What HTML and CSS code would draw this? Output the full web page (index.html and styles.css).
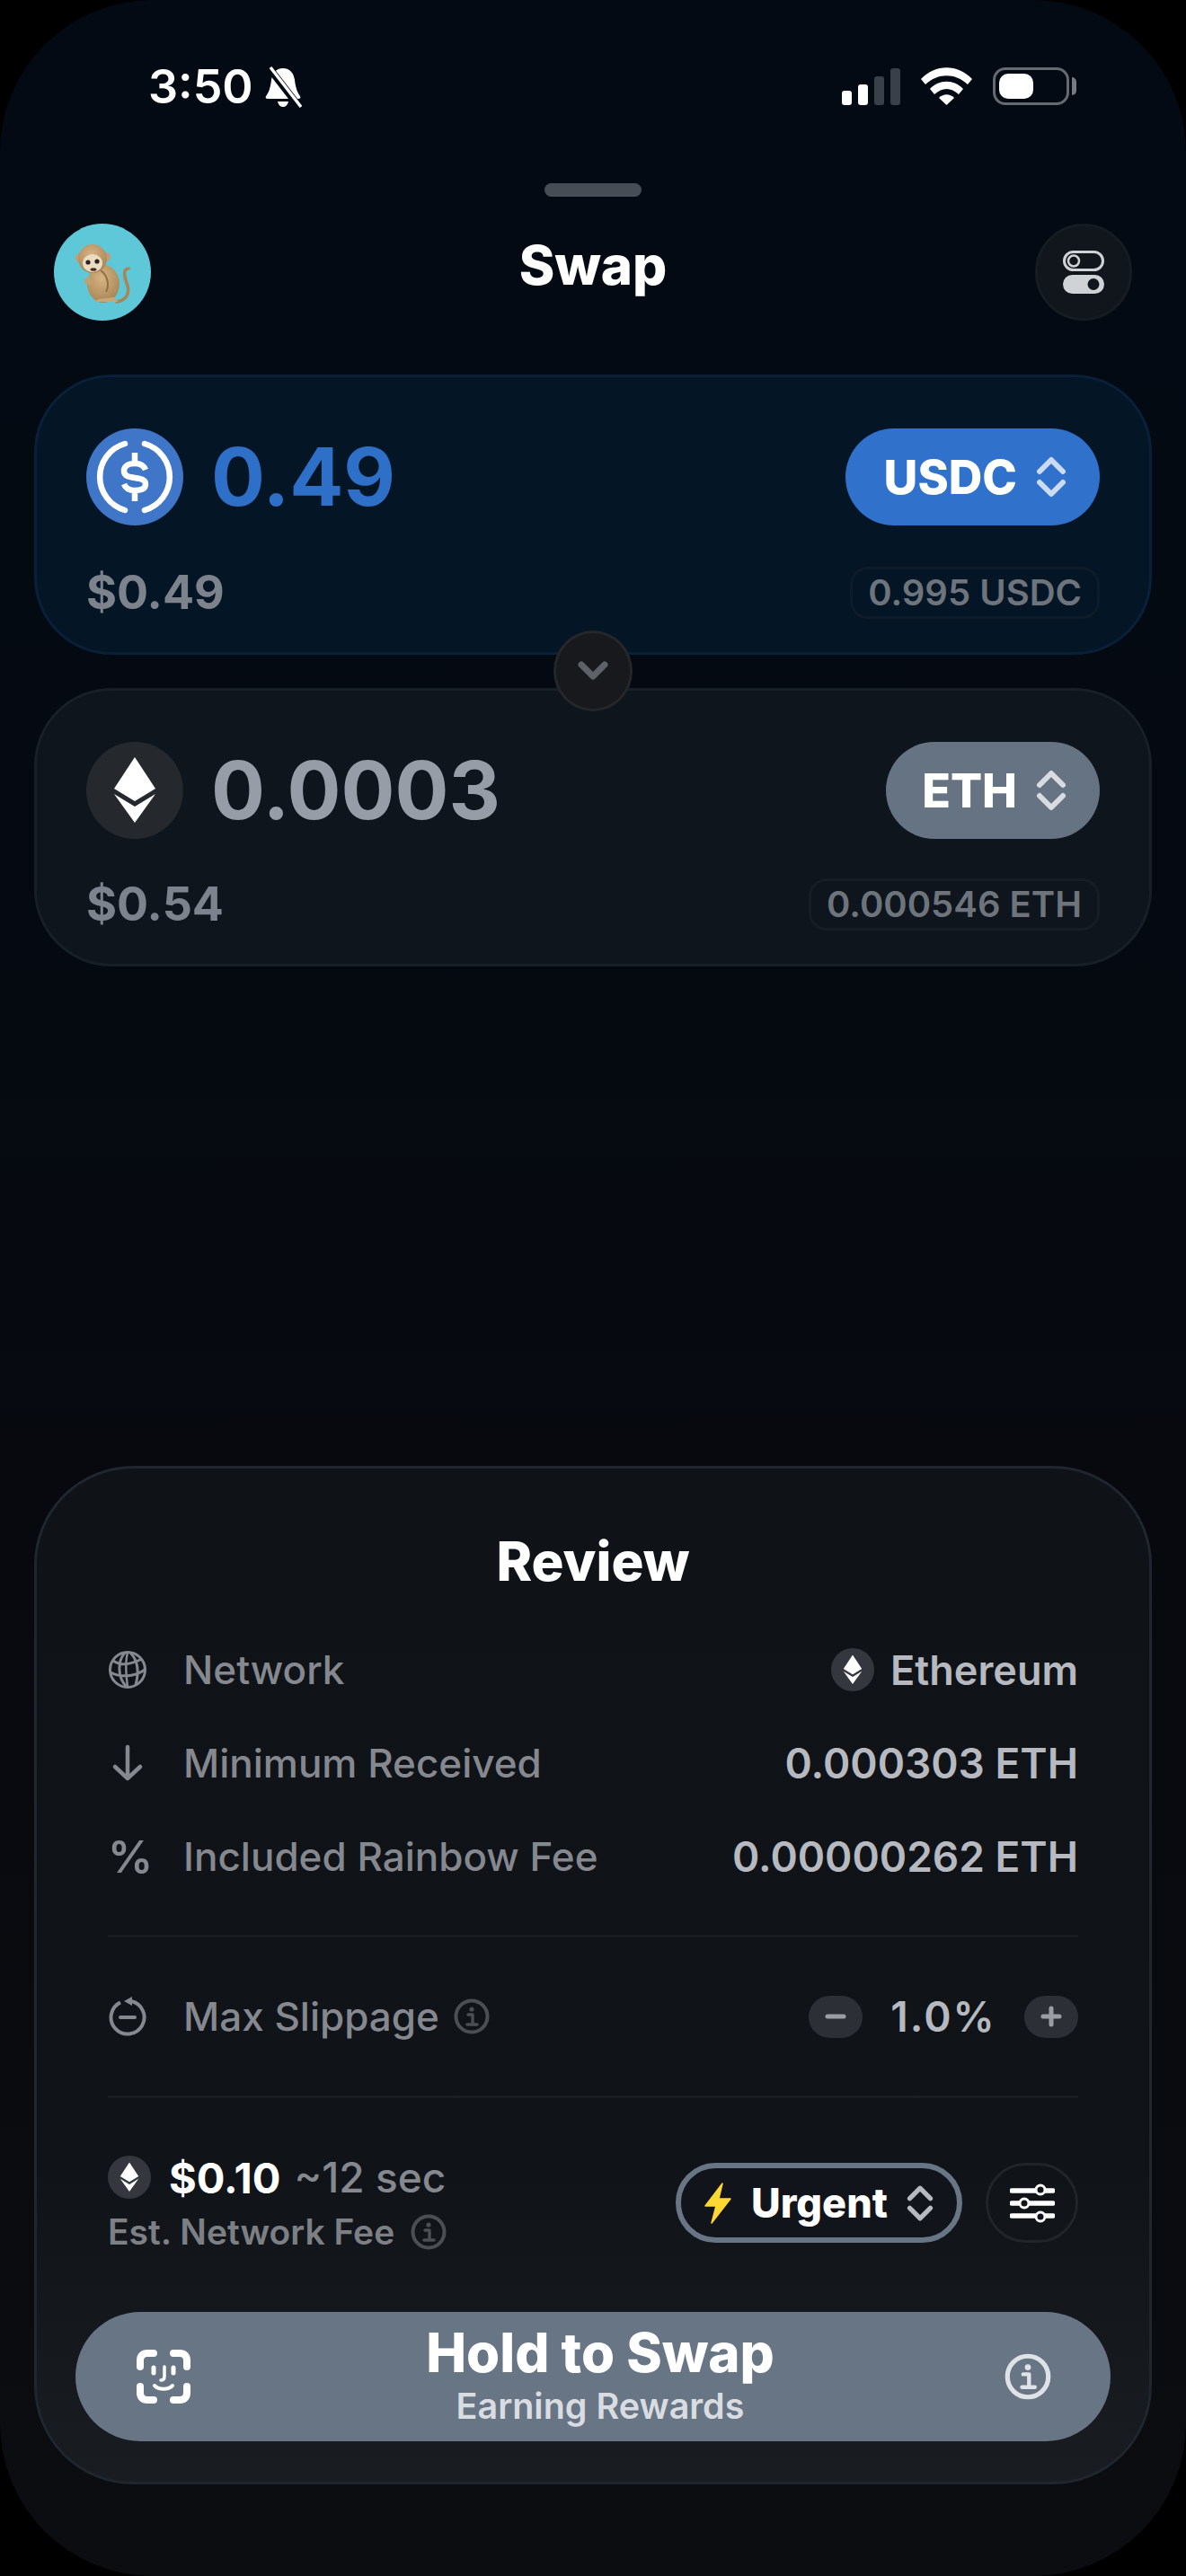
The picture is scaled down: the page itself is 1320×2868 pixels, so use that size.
FILE: index.html
```html
<!DOCTYPE html>
<html lang="en">
<head>
    <meta charset="UTF-8">
    <title>Swap</title>
    <link rel="stylesheet" href="styles.css">
</head>
<body>
    <svg class="defs" width="0" height="0">
        <symbol id="eth" viewBox="0 0 108 108">
            <polygon points="54,17 77,52 54,66 31,52" fill="#fff"/>
            <polygon points="31,58 54,72 77,58 54,90" fill="#fff"/>
        </symbol>
        <symbol id="updown" viewBox="0 0 34 46">
            <path d="M4 17 L17 4 L30 17 M4 29 L17 42 L30 29" fill="none" stroke="currentColor" stroke-width="6" stroke-linecap="round" stroke-linejoin="round"/>
        </symbol>
        <symbol id="info" viewBox="0 0 40 40">
            <circle cx="20" cy="20" r="17.5" fill="none" stroke="currentColor" stroke-width="4"/>
            <circle cx="20" cy="12" r="2.6" fill="currentColor"/>
            <path d="M16 18 H21 V28 M15 29 H26" fill="none" stroke="currentColor" stroke-width="3.4" stroke-linecap="round" stroke-linejoin="round"/>
        </symbol>
    </svg>

    <div class="screen">
        <div class="status">
            <div class="status-left">
                <span class="time">3:50</span>
                <svg class="bell" viewBox="0 0 42 46">
                    <path d="M21 2 C13 2 9 8 8 15 C7 24 5 29 2 33 C1 35 2 36 4 36 H38 C40 36 41 35 40 33 C37 29 35 24 34 15 C33 8 29 2 21 2 Z" fill="#fff"/>
                    <path d="M15 39 H27 C26 43 24 45 21 45 C18 45 16 43 15 39 Z" fill="#fff"/>
                    <path d="M5 1 L39 45" stroke="#030a13" stroke-width="8"/>
                    <path d="M7 1 L41 45" stroke="#fff" stroke-width="3.4"/>
                </svg>
            </div>
            <div class="status-right">
                <div class="signal">
                    <i class="bar bar1"></i>
                    <i class="bar bar2"></i>
                    <i class="bar bar3"></i>
                    <i class="bar bar4"></i>
                </div>
                <svg class="wifi" viewBox="0 0 57 42">
                    <path d="M0 13 C16 -4 41 -4 57 13 L52 19 C38 6 19 6 5 19 Z" fill="#fff"/>
                    <path d="M10 24 C20 13 37 13 47 24 L42 30 C33 22 24 22 15 30 Z" fill="#fff"/>
                    <path d="M20 34 C25 29 32 29 37 34 L28.500 42 Z" fill="#fff"/>
                </svg>
                <div class="battery"><div class="battery-level"></div></div>
                <div class="battery-nub"></div>
            </div>
        </div>

        <div class="handle"></div>

        <div class="header">
            <div class="avatar">
                <svg viewBox="0 0 108 108" width="108" height="108">
                    <defs>
                        <radialGradient id="fur" cx="45%" cy="35%" r="75%">
                            <stop offset="0" stop-color="#d6b483"/>
                            <stop offset="1" stop-color="#a27f50"/>
                        </radialGradient>
                    </defs>
                    <path d="M70 87 C82 85 85 76 81 66 C78 58 77 50 83 50" fill="none" stroke="#a88657" stroke-width="3.600" stroke-linecap="round"/>
                    <ellipse cx="55" cy="67" rx="18" ry="21" fill="url(#fur)"/>
                    <path d="M44 87 L72 87 L66 82 L50 84 Z" fill="#c9a678"/>
                    <path d="M52 52 C60 58 62 68 58 76" fill="none" stroke="#93703f" stroke-width="2"/>
                    <ellipse cx="39" cy="64" rx="5" ry="4" fill="#c4a070"/>
                    <circle cx="29" cy="38" r="5" fill="#c99a78"/>
                    <circle cx="58" cy="37" r="5" fill="#c99a78"/>
                    <ellipse cx="43" cy="39" rx="16" ry="16" fill="url(#fur)"/>
                    <ellipse cx="43" cy="44" rx="11" ry="10" fill="#eadcc0"/>
                    <circle cx="38" cy="43" r="2.600" fill="#2a2320"/>
                    <circle cx="48" cy="42" r="2.600" fill="#2a2320"/>
                    <ellipse cx="44" cy="51" rx="3.500" ry="1.800" fill="#4a2c22"/>
                </svg>
            </div>
            <h1 class="title">Swap</h1>
            <div class="round-btn">
                <svg viewBox="0 0 46 48" width="46" height="48">
                    <rect x="1.500" y="1.500" width="43" height="20" rx="10" fill="none" stroke="#d0d3d6" stroke-width="3"/>
                    <circle cx="12" cy="11.500" r="6" fill="none" stroke="#d0d3d6" stroke-width="2.500"/>
                    <rect x="0" y="27" width="46" height="21" rx="10.500" fill="#d0d3d6"/>
                    <circle cx="34" cy="37.500" r="6.500" fill="#10161c"/>
                </svg>
            </div>
        </div>

        <div class="swap-cards">
            <div class="token-card token-card-usdc">
                <div class="token-row">
                    <svg class="token-icon" viewBox="0 0 108 108">
                        <circle cx="54" cy="54" r="54" fill="#3f76c8"/>
                        <path d="M43 17 A38.500 38.500 0 0 0 43 91 M65 17 A38.500 38.500 0 0 1 65 91" fill="none" stroke="#fff" stroke-width="6.500" stroke-linecap="round"/>
                        <path d="M66 46 C64 41 60 39 54 39 C47 39 42 42 42 47 C42 53 47 54 54 55 C61 56 66 57 66 62 C66 67 61 69 54 69 C48 69 44 67 42 62 M54 27 V39 M54 69 V81" fill="none" stroke="#fff" stroke-width="6.500"/>
                    </svg>
                    <span class="amount amount-usdc">0.49</span>
                    <div class="token-pill pill-usdc">
                        <span>USDC</span>
                        <svg class="updown"><use href="#updown"/></svg>
                    </div>
                </div>
                <div class="value-row">
                    <span class="fiat">$0.49</span>
                    <span class="balance">0.995 USDC</span>
                </div>
            </div>

            <div class="flip-btn">
                <svg viewBox="0 0 36 24" width="36" height="24">
                    <path d="M5 5 L18 18 L31 5" fill="none" stroke="#5e6268" stroke-width="7" stroke-linecap="round" stroke-linejoin="round"/>
                </svg>
            </div>

            <div class="token-card token-card-eth">
                <div class="token-row">
                    <div class="eth-circle eth-large"><svg><use href="#eth"/></svg></div>
                    <span class="amount amount-eth">0.0003</span>
                    <div class="token-pill pill-eth">
                        <span>ETH</span>
                        <svg class="updown"><use href="#updown"/></svg>
                    </div>
                </div>
                <div class="value-row">
                    <span class="fiat">$0.54</span>
                    <span class="balance">0.000546 ETH</span>
                </div>
            </div>
        </div>

        <div class="review">
            <h2 class="review-title">Review</h2>
            <div class="review-body">
                <div class="row">
                    <div class="row-label">
                        <svg class="row-icon" viewBox="0 0 44 44" fill="none" stroke="#85898f" stroke-width="3">
                            <circle cx="22" cy="22" r="19.500"/>
                            <path d="M19 3 C11 12 10 30 21 41 M25 3 C33 11 35 24 31 39 M6 12 C16 19 30 14 38 10 M3 25 C14 31 30 30 41 22"/>
                            <path d="M22 3 C19 14 20 26 22 41" stroke-width="2.500"/>
                        </svg>
                        <span>Network</span>
                    </div>
                    <div class="row-value row-value-network">
                        <div class="eth-circle eth-small"><svg><use href="#eth"/></svg></div>
                        <span>Ethereum</span>
                    </div>
                </div>
                <div class="row">
                    <div class="row-label">
                        <svg class="row-icon" viewBox="0 0 44 44" fill="none" stroke="#85898f" stroke-width="4.500" stroke-linecap="round" stroke-linejoin="round">
                            <path d="M22 4 V39 M8 26 L22 39 L36 26"/>
                        </svg>
                        <span>Minimum Received</span>
                    </div>
                    <div class="row-value"><span>0.000303 ETH</span></div>
                </div>
                <div class="row">
                    <div class="row-label">
                        <span class="row-icon percent">%</span>
                        <span>Included Rainbow Fee</span>
                    </div>
                    <div class="row-value"><span>0.00000262 ETH</span></div>
                </div>

                <div class="divider divider-first"></div>

                <div class="row row-slippage">
                    <div class="row-label">
                        <svg class="row-icon" viewBox="0 0 44 44" fill="none" stroke="#85898f" stroke-width="4">
                            <path d="M26 5 A18.500 18.500 0 1 1 14 6.400"/>
                            <path d="M27 0 L18 5 L27 10 Z" fill="#85898f" stroke="none"/>
                            <path d="M14 23 H30" stroke-linecap="round"/>
                        </svg>
                        <span>Max Slippage</span>
                        <svg class="info info-row"><use href="#info"/></svg>
                    </div>
                    <div class="row-value stepper">
                        <div class="step-btn">
                            <svg viewBox="0 0 24 24" width="24" height="24"><path d="M3 12 H21" stroke="#9a9da2" stroke-width="5" stroke-linecap="round"/></svg>
                        </div>
                        <span class="slippage">1.0%</span>
                        <div class="step-btn">
                            <svg viewBox="0 0 24 24" width="24" height="24"><path d="M3 12 H21 M12 3 V21" stroke="#9a9da2" stroke-width="5" stroke-linecap="round"/></svg>
                        </div>
                    </div>
                </div>

                <div class="divider"></div>

                <div class="fee-row">
                    <div class="fee-info">
                        <div class="fee-top">
                            <div class="eth-circle eth-fee"><svg><use href="#eth"/></svg></div>
                            <span class="fee-price">$0.10</span>
                            <span class="fee-time">~12 sec</span>
                        </div>
                        <div class="fee-bottom">
                            <span>Est. Network Fee</span>
                            <svg class="info info-fee"><use href="#info"/></svg>
                        </div>
                    </div>
                    <div class="fee-actions">
                        <div class="speed-pill">
                            <svg class="bolt" viewBox="0 0 30 46">
                                <path d="M20 1 L1 26 H13 L8 45 L29 18 H16 Z" fill="#fdd835" stroke="#fdd835" stroke-width="1.500" stroke-linejoin="round"/>
                            </svg>
                            <span>Urgent</span>
                            <svg class="updown updown-speed"><use href="#updown"/></svg>
                        </div>
                        <div class="sliders-btn">
                            <svg viewBox="0 0 50 44" width="50" height="44" fill="none" stroke="#fff">
                                <path d="M2 8 H48 M2 22 H48 M2 36 H48" stroke-width="5.500" stroke-linecap="round"/>
                                <circle cx="34" cy="7" r="5" fill="#11141a" stroke-width="3"/>
                                <circle cx="16" cy="22" r="5" fill="#11141a" stroke-width="3"/>
                                <circle cx="34" cy="37" r="5" fill="#11141a" stroke-width="3"/>
                            </svg>
                        </div>
                    </div>
                </div>
            </div>

            <div class="hold-btn">
                <svg class="face-id" viewBox="0 0 60 60" fill="none" stroke="#fff" stroke-linecap="round">
                    <path d="M4 19 V12 C4 7 7 4 12 4 H19 M41 4 H48 C53 4 56 7 56 12 V19 M4 41 V48 C4 53 7 56 12 56 H19 M41 56 H48 C53 56 56 53 56 48 V41" stroke-width="8"/>
                    <path d="M19 20 V26 M41 20 V26" stroke-width="5"/>
                    <path d="M31 19 V30 C31 33 29 34 27 34" stroke-width="3.500"/>
                    <path d="M20 40 C25 45 35 45 40 40" stroke-width="4"/>
                </svg>
                <div class="hold-text">
                    <span class="hold-title">Hold to Swap</span>
                    <span class="hold-sub">Earning Rewards</span>
                </div>
                <svg class="info info-hold"><use href="#info"/></svg>
            </div>
        </div>
    </div>
</body>
</html>
```

FILE: styles.css
```css
* { margin: 0; padding: 0; box-sizing: border-box; }
html, body { background: #000; }
body {
    width: 1320px;
    height: 2868px;
    overflow: hidden;
    font-family: Inter, "Liberation Sans", sans-serif;
    color: #fff;
}
.defs { position: absolute; }

.screen {
    width: 1320px;
    height: 2868px;
    border-radius: 170px;
    background: linear-gradient(180deg, #030a13 0%, #050a11 40%, #07090e 60%, #0b0d10 100%);
    display: flex;
    flex-direction: column;
}

/* status bar */
.status {
    height: 204px;
    padding: 74px 122px 0 165px;
    display: flex;
    justify-content: space-between;
    align-items: flex-start;
}
.status-left { display: flex; align-items: center; gap: 12px; height: 46px; }
.time { font-size: 52px; font-weight: 600; line-height: 46px; }
.bell { width: 42px; height: 46px; }
.status-right { display: flex; align-items: flex-end; height: 43px; }
.signal { display: flex; align-items: flex-end; gap: 7px; margin-right: 23px; }
.bar { display: block; width: 11px; border-radius: 3px; background: #fff; }
.bar1 { height: 16px; }
.bar2 { height: 23px; }
.bar3 { height: 32px; background: #3a4047; }
.bar4 { height: 41px; background: #3a4047; }
.wifi { width: 57px; height: 42px; margin-right: 23px; }
.battery {
    width: 85px;
    height: 42px;
    border: 3px solid #666a70;
    border-radius: 14px;
    padding: 4px;
}
.battery-level { width: 38px; height: 100%; background: #fff; border-radius: 10px; }
.battery-nub {
    width: 5px;
    height: 20px;
    margin: 0 0 11px 3px;
    background: #777b80;
    border-radius: 0 5px 5px 0;
}

.handle {
    width: 108px;
    height: 15px;
    margin: 0 auto;
    border-radius: 8px;
    background: #474d55;
}

/* header */
.header {
    height: 108px;
    margin-top: 30px;
    padding: 0 60px;
    display: flex;
    justify-content: space-between;
    align-items: center;
}
.avatar { width: 108px; height: 108px; border-radius: 50%; background: #5ec8d8; overflow: hidden; }
.title { font-size: 60px; font-weight: 800; line-height: 68px; margin-top: -16px; }
.round-btn {
    width: 108px;
    height: 108px;
    border-radius: 50%;
    background: #10161c;
    border: 3px solid #161c22;
    display: flex;
    justify-content: center;
    align-items: center;
}

/* token cards */
.swap-cards {
    position: relative;
    margin: 60px 38px 0;
    display: flex;
    flex-direction: column;
    gap: 37px;
}
.token-card {
    height: 312px;
    padding: 57px 55px 35px;
    border-radius: 86px;
    border: 3px solid;
    display: flex;
    flex-direction: column;
    justify-content: space-between;
}
.token-card-usdc { background: #041525; border-color: #08203a; }
.token-card-eth { height: 310px; background: #0e151d; border-color: #181f27; }
.token-row { display: flex; align-items: center; height: 108px; }
.token-icon { width: 108px; height: 108px; }
.eth-circle {
    border-radius: 50%;
    background: #25292e;
    flex-shrink: 0;
}
.eth-circle svg { display: block; width: 100%; height: 100%; }
.eth-large { width: 108px; height: 108px; }
.eth-small { width: 48px; height: 48px; background: #34383e; }
.eth-fee { width: 48px; height: 48px; background: #34383e; }
.amount { font-size: 89px; font-weight: 700; margin-left: 31px; line-height: 108px; }
.amount-usdc { color: #2e6fc8; }
.amount-eth { color: #979da6; }
.token-pill {
    margin-left: auto;
    height: 108px;
    border-radius: 54px;
    padding: 0 37px 0 43px;
    display: flex;
    align-items: center;
    gap: 21px;
    font-size: 52px;
    font-weight: 800;
}
.pill-usdc { background: #3071cc; }
.pill-eth { padding-left: 40px; background: #667382; }
.updown { width: 34px; height: 46px; color: rgba(255, 255, 255, 0.75); }
.value-row { display: flex; justify-content: space-between; align-items: center; }
.fiat { font-size: 52px; font-weight: 700; color: #7c838c; }
.balance {
    height: 58px;
    padding: 0 17px;
    border-radius: 20px;
    border: 3px solid #101b28;
    font-size: 40px;
    font-weight: 600;
    line-height: 52px;
    color: #6e747c;
}
.token-card-eth .balance { border-color: #171d24; }
.flip-btn {
    position: absolute;
    top: 285px;
    left: 578px;
    width: 88px;
    height: 90px;
    border-radius: 50%;
    background: #18191d;
    border: 3px solid #242629;
    display: flex;
    justify-content: center;
    align-items: center;
}

/* review sheet */
.review {
    margin: auto 38px 102px;
    height: 1134px;
    border-radius: 110px;
    border: 3px solid #1f262e;
    background: linear-gradient(180deg, #0f1217 0%, #101318 70%, #191c20 100%);
}
.review-title {
    margin-top: 69px;
    font-size: 60px;
    font-weight: 800;
    line-height: 68px;
    text-align: center;
}
.review-body { margin-top: 35px; padding: 0 79px; }
.row { height: 104px; display: flex; justify-content: space-between; align-items: center; }
.row-label { display: flex; align-items: center; font-size: 44px; font-weight: 500; color: #85898f; }
.row-icon { width: 44px; height: 44px; margin-right: 40px; flex-shrink: 0; }
.percent { font-size: 50px; font-weight: 600; line-height: 44px; }
.row-value {
    display: flex;
    align-items: center;
    gap: 18px;
    font-size: 46px;
    font-weight: 600;
    color: #b6b9bf;
}
.row-value-network { font-size: 45px; }
.divider { height: 3px; margin-top: 36px; background: #1a1d22; }
.divider-first { margin-top: 35px; }
.row-slippage { margin-top: 36px; }
.info { color: #4b4e53; }
.info-row { width: 40px; height: 40px; margin-left: 16px; }
.stepper { gap: 0; }
.step-btn {
    width: 60px;
    height: 47px;
    border-radius: 24px;
    background: #2c3036;
    display: flex;
    justify-content: center;
    align-items: center;
}
.slippage { width: 180px; text-align: center; letter-spacing: 2px; }

.fee-row {
    margin-top: 72px;
    height: 89px;
    display: flex;
    justify-content: space-between;
}
.fee-info { margin-top: -8px; }
.fee-top { display: flex; align-items: center; height: 48px; }
.fee-price { margin-left: 20px; font-size: 47px; font-weight: 700; }
.fee-time { margin-left: 15px; font-size: 46px; font-weight: 500; color: #85898f; }
.fee-bottom {
    margin-top: 13px;
    display: flex;
    align-items: center;
    font-size: 39px;
    font-weight: 600;
    color: #7c8085;
}
.info-fee { width: 40px; height: 40px; margin-left: 18px; }
.fee-actions { display: flex; gap: 26px; }
.speed-pill {
    width: 319px;
    height: 89px;
    border-radius: 45px;
    border: 6px solid #677585;
    background: #11141a;
    padding: 0 26px;
    display: flex;
    align-items: center;
    font-size: 45px;
    font-weight: 800;
}
.bolt { width: 30px; height: 46px; margin-right: 22px; }
.updown-speed { margin-left: auto; width: 30px; height: 42px; color: #b6b9bf; }
.sliders-btn {
    width: 103px;
    height: 89px;
    border-radius: 45px;
    border: 3px solid #212428;
    display: flex;
    justify-content: center;
    align-items: center;
}
.hold-btn {
    margin: 77px 43px 0;
    height: 144px;
    border-radius: 72px;
    background: #687585;
    padding: 0 66px 0 68px;
    display: flex;
    align-items: center;
}
.face-id { width: 60px; height: 60px; flex-shrink: 0; }
.hold-text {
    flex: 1;
    margin: -3px 0 0 6px;
    display: flex;
    flex-direction: column;
    align-items: center;
}
.hold-title { font-size: 60px; font-weight: 800; line-height: 70px; }
.hold-sub { font-size: 39.5px; font-weight: 600; line-height: 51px; color: #d9dde2; }
.info-hold { width: 52px; height: 52px; color: #dfe2e6; }
```
